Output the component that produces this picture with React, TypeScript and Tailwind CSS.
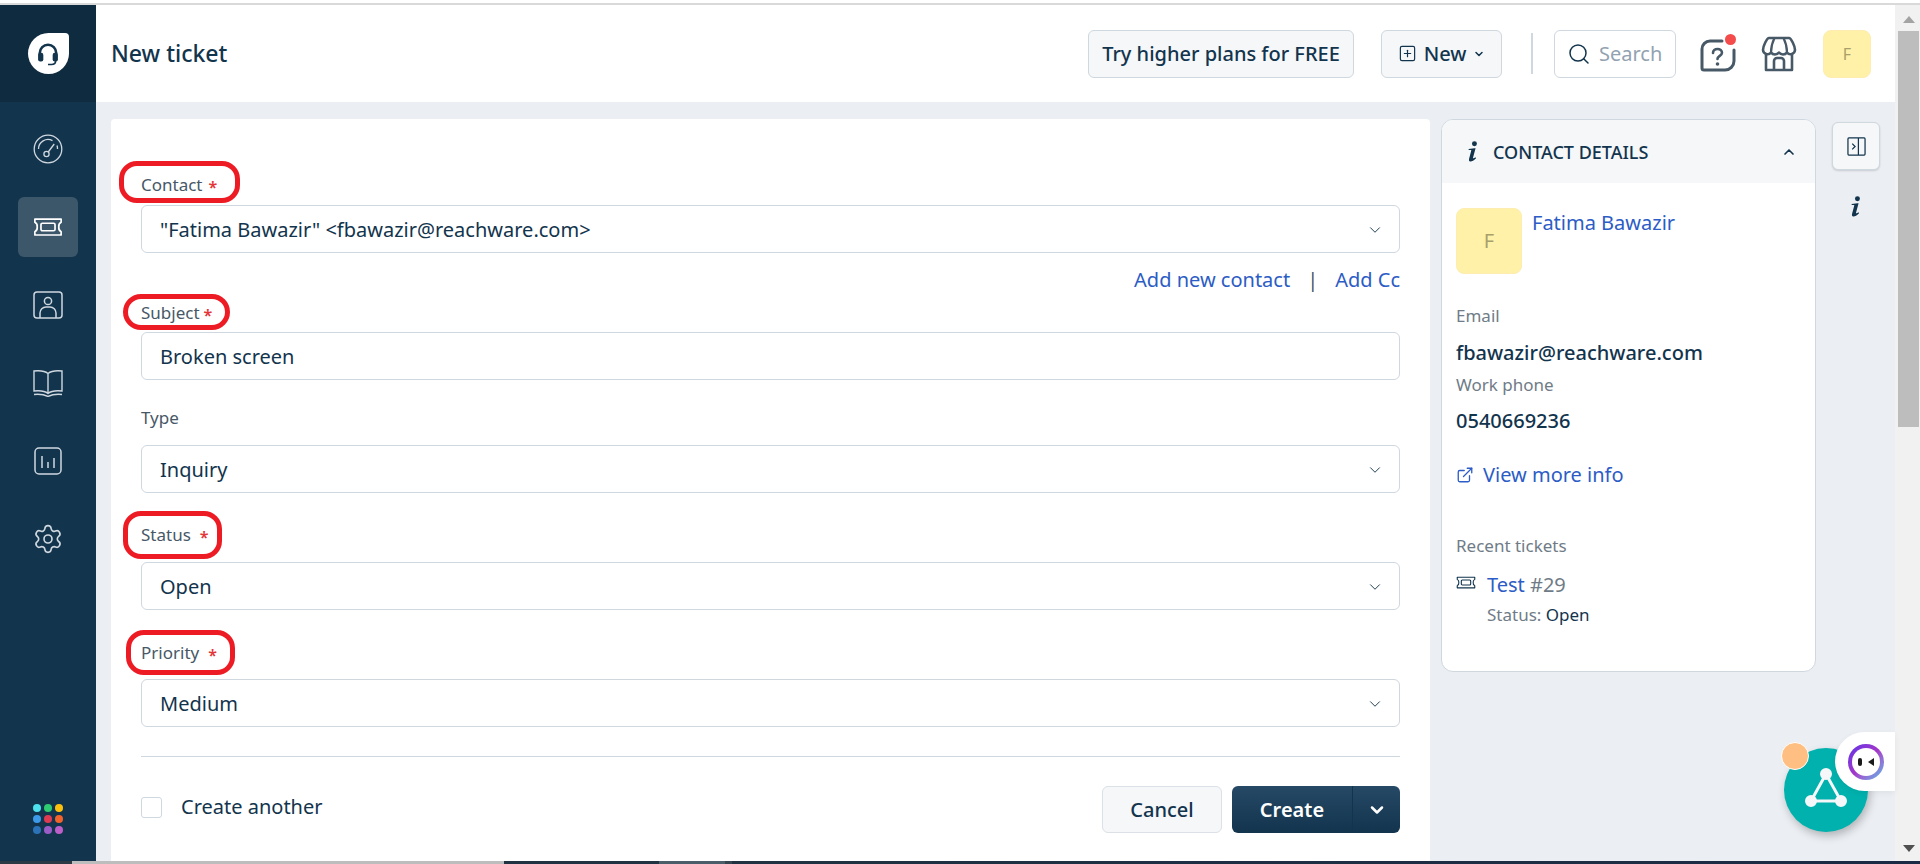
import React from "react";
import { ChevronDown, ChevronUp, Search, SquarePlus, ExternalLink, Settings } from "lucide-react";

const font = { fontFamily: '"Noto Sans", "Open Sans", sans-serif' };

const TicketIcon = ({ className }: { className?: string }) => (
  <svg viewBox="0 0 32 20" fill="none" stroke="currentColor" strokeWidth="1.8" strokeLinejoin="round" className={className}>
    <path d="M2 1.5h28v3.5a5 5 0 0 0-2.5 5 5 5 0 0 0 2.5 5v3.5H2V15a5 5 0 0 0 2.5-5A5 5 0 0 0 2 5z" />
    <rect x="8.5" y="6" width="15" height="8" rx="1.5" />
  </svg>
);

const InfoIcon = () => (
  <svg viewBox="0 0 12 22" className="h-[21px] w-[12px] fill-[#12344d]">
    <circle cx="7.5" cy="2.8" r="2.6" />
    <path d="M1.5 8.5l6-.8h1.2L6 17.5c-.2.9.5 1 2.6-.4l.6.9c-2.6 2.7-4.6 3.6-6 3.4-1.3-.2-1.7-1.2-1.3-2.9L4.2 10c.1-.5-.3-.7-1-.7l-1.8.2z" />
  </svg>
);

const Field = ({
  label,
  value,
  mark,
  ring,
  chevron = true,
  className = "",
}: {
  label: string;
  value: string;
  mark?: string;
  ring?: string;
  chevron?: boolean;
  className?: string;
}) => (
  <div className={className}>
    <div className="relative h-5 text-[17px] leading-[22px] text-[#475867]">
      {label}
      {mark && <span className={`inline-block translate-y-[2px] text-[16px] font-semibold text-[#e43538] ${mark}`}>*</span>}
      {ring && <span className={`absolute rounded-[18px] border-[5px] border-[#ed1c24] ${ring}`} />}
    </div>
    <div className="flex h-12 items-center justify-between rounded-md border border-[#cfd7df] bg-white pl-[18px] pr-[15px] pt-px text-[20px] text-[#12344d]">
      <span>{value}</span>
      {chevron && <ChevronDown size={18} strokeWidth={1.25} className="text-[#12344d]" />}
    </div>
  </div>
);

const dots = ["#4de1ee", "#2ecc71", "#fdc10d", "#3d9ae8", "#de3a52", "#f2622a", "#2c72b8", "#9a5cc6", "#bd5ec9"];

const Sidebar = () => (
  <aside className="flex w-24 shrink-0 flex-col bg-[#12344d] text-[#cfd7df]">
    <div className="flex h-[97px] items-center justify-center bg-[#0f2b40]">
      <div className="flex h-[41px] w-[41px] items-center justify-center rounded-[50%_4px_50%_50%] bg-white">
        <svg viewBox="0 0 24 24" fill="none" stroke="#12344d" strokeWidth="2.2" className="h-[28px] w-[28px]">
          <path d="M5 13v-2a7 7 0 0 1 14 0v2" />
          <rect x="3.5" y="11" width="4.5" height="7.5" rx="1.8" fill="#12344d" stroke="none" />
          <rect x="16" y="11" width="4.5" height="7.5" rx="1.8" fill="#12344d" stroke="none" />
          <path d="M18.5 18c0 2-1.5 3-3.5 3h-3" strokeWidth="1.4" />
        </svg>
      </div>
    </div>
    <div className="flex flex-1 flex-col items-center pt-[32px]">
      <svg viewBox="0 0 30 30" fill="none" stroke="currentColor" strokeWidth="1.3" className="h-[30px] w-[30px]">
        <circle cx="15" cy="15" r="13.8" />
        <path d="M5.5 15a9.5 9.5 0 0 1 14-8.4M24 11.5a9.5 9.5 0 0 1 .5 3.5" />
        <circle cx="13.5" cy="20" r="2.6" />
        <path d="M15.2 18l6-8" />
      </svg>
      <div className="mt-[33px] flex h-[60px] w-[60px] items-center justify-center rounded-md bg-[#3c566a] text-white">
        <TicketIcon className="h-[20px] w-[30px]" />
      </div>
      <svg viewBox="0 0 30 28" fill="none" stroke="currentColor" strokeWidth="1.5" className="mt-[34px] h-[28px] w-[30px]">
        <rect x="1" y="1" width="28" height="26" rx="3" />
        <circle cx="15" cy="10" r="3.6" />
        <path d="M7 27v-5a6 6 0 0 1 6-6h4a6 6 0 0 1 6 6v5" />
      </svg>
      <svg viewBox="0 0 32 28" fill="none" stroke="currentColor" strokeWidth="1.4" className="mt-[50px] h-[28px] w-[32px]">
        <path d="M16 4.5C13 2 7 1.5 2 2v20c5-.5 11 0 14 2.500 3-2.500 9-3 14-2.500V2c-5-.5-11 0-14 2.500zM16 4.500v20" />
        <path d="M2 25.500c5-.5 10 0 14 2 4-2 9-2.500 14-2" />
      </svg>
      <svg viewBox="0 0 28 28" fill="none" stroke="currentColor" strokeWidth="1.5" className="mt-[50px] h-[28px] w-[28px]">
        <rect x="1" y="1" width="26" height="26" rx="4" />
        <path d="M8 9v12M14 15v6M20 11v10" />
      </svg>
      <Settings size={32} strokeWidth={1.25} className="mt-[48px]" />
      <div className="mt-auto mb-[27px] grid grid-cols-3 gap-[3px]">
        {dots.map((c) => (
          <span key={c} className="h-2 w-2 rounded-full" style={{ backgroundColor: c }} />
        ))}
      </div>
    </div>
  </aside>
);

const Header = () => (
  <header className="flex h-[97px] shrink-0 items-center bg-white pl-[15px] pr-6 text-[#12344d]">
    <h1 className="text-[23px] font-medium">New ticket</h1>
    <button className="ml-auto h-12 w-[266px] rounded-md border border-[#cfd7df] bg-[#f5f7f9] text-[20px] font-medium">
      Try higher plans for FREE
    </button>
    <button className="ml-[27px] flex h-12 w-[121px] items-center justify-center gap-[7px] rounded-md border border-[#cfd7df] bg-[#f5f7f9] text-[20px] font-medium">
      <SquarePlus size={19} strokeWidth={1.5} />
      New
      <ChevronDown size={12} strokeWidth={3} />
    </button>
    <div className="ml-[29px] h-[41px] w-0.5 bg-[#cfd7df]" />
    <div className="ml-[21px] flex h-12 w-[122px] items-center gap-[8px] rounded-md border border-[#cfd7df] pl-3 text-[20px] text-[#92a2b1]">
      <Search size={24} strokeWidth={1.5} className="shrink-0 text-[#12344d]" />
      Search
    </div>
    <div className="relative ml-[23px] h-[38px] w-[37px]">
      <svg viewBox="0 0 37 38" fill="none" stroke="#475867" strokeWidth="3" strokeLinecap="round" className="h-full w-full">
        <path d="M23 6H11a8 8 0 0 0-8 8v19a2 2 0 0 0 2 2h21a9 9 0 0 0 9-9V15" />
        <path d="M14 18c0-2.5 2-4 4.500-4s4.500 1.500 4.500 3.800c0 3-4.500 3.200-4.500 6.200" strokeWidth="2.6" />
        <circle cx="18.5" cy="29" r="1.8" fill="#475867" stroke="none" />
      </svg>
      <span className="absolute -top-[1px] right-0 h-[11px] w-[11px] rounded-full bg-[#f44b4b]" />
    </div>
    <svg viewBox="0 0 36 36" fill="none" stroke="#475867" strokeWidth="2.6" className="ml-[25px] h-9 w-9" strokeLinejoin="round">
      <path d="M8 2h20c2 0 6 8 6 12a4.500 4.500 0 0 1-8 2.500 5 5 0 0 1-8 0 5 5 0 0 1-8 0A4.500 4.500 0 0 1 2 14C2 10 6 2 8 2z" />
      <path d="M13.5 2c-2 4-3.500 9-3.500 14.500M22.500 2c2 4 3.500 9 3.500 14.500" strokeWidth="2.2" />
      <path d="M5 18v16h26V18M13 34V25a3 3 0 0 1 3-3h4a3 3 0 0 1 3 3v9" />
    </svg>
    <div className="ml-[26px] flex h-12 w-12 items-center justify-center rounded-lg border border-[#fdedb0] bg-[#fff2a8] text-[16px] text-[#a8a06a]">
      F
    </div>
  </header>
);

const FormCard = () => (
  <section className="relative w-[1319px] shrink-0 rounded-t-[4px] bg-white px-[30px] pt-[55px]">
    <Field
      label="Contact"
      mark="ml-[6px]"
      ring="-left-[22px] -top-[13px] h-[42px] w-[121px]"
      value={'"Fatima Bawazir" <fbawazir@reachware.com>'}
      className="[&>div:last-child]:mt-[11px]"
    />
    <div className="mt-[15px] flex h-6 items-center justify-end gap-[17px] text-[20px] text-[#2c5cc5]">
      <span>Add new contact</span>
      <span className="text-[#475867]">|</span>
      <span>Add Cc</span>
    </div>
    <Field
      label="Subject"
      mark="ml-[4px]"
      ring="-left-[18px] -top-[8px] h-[36px] w-[107px]"
      value="Broken screen"
      chevron={false}
      className="mt-[10px] [&>div:last-child]:mt-[10px]"
    />
    <Field label="Type" value="Inquiry" className="mt-[27px] [&>div:last-child]:mt-[18px]" />
    <Field
      label="Status"
      mark="ml-[9px]"
      ring="-left-[18px] -top-[13px] h-[48px] w-[99px]"
      value="Open"
      className="mt-[31px] [&>div:last-child]:mt-[18px]"
    />
    <Field
      label="Priority"
      mark="ml-[9px]"
      ring="-left-[15px] -top-[12px] h-[45px] w-[109px]"
      value="Medium"
      className="mt-[32px] [&>div:last-child]:mt-[17px]"
    />
    <div className="mt-[29px] h-px bg-[#cfd7df]" />
    <div className="mt-[29px] flex items-start justify-between">
      <label className="mt-[6px] flex items-center gap-[19px] text-[20px] text-[#12344d]">
        <span className="h-[21px] w-[21px] rounded-[3px] border border-[#cfd7df]" />
        Create another
      </label>
      <div className="flex gap-[10px]">
        <button className="h-[47px] w-[120px] rounded-md border border-[#dbe1e7] bg-[#f5f7f9] text-[20px] font-medium text-[#12344d]">
          Cancel
        </button>
        <div className="flex h-[47px] w-[168px] rounded-md bg-gradient-to-b from-[#264966] to-[#12344d] text-white">
          <span className="flex w-[120px] items-center justify-center text-[20px] font-semibold">Create</span>
          <span className="flex flex-1 items-center justify-center border-l border-[#12344d]">
            <ChevronDown size={20} strokeWidth={3} />
          </span>
        </div>
      </div>
    </div>
  </section>
);

const ContactCard = () => (
  <section className="ml-[11px] h-[553px] w-[375px] shrink-0 overflow-hidden rounded-xl border border-[#cfd7df] bg-white text-[#12344d]">
    <div className="flex h-[63px] items-center bg-[#f5f7f9] pl-[25px] pr-[18px]">
      <InfoIcon />
      <span className="ml-[14px] pt-px text-[18px] font-medium">CONTACT DETAILS</span>
      <ChevronUp size={16} strokeWidth={2.5} className="ml-auto" />
    </div>
    <div className="px-[14px] pt-[25px]">
      <div className="flex gap-[10px]">
        <div className="flex h-[66px] w-[66px] items-center justify-center rounded-lg border border-[#fdedb0] bg-[#fff2a8] text-[20px] text-[#a8a06a]">
          F
        </div>
        <span className="text-[20px] leading-[30px] text-[#2c5cc5]">Fatima Bawazir</span>
      </div>
      <div className="mt-[31px] text-[17px] leading-[22px] text-[#6f7c87]">Email</div>
      <div className="mt-[14px] text-[20px] font-medium leading-[24px]">fbawazir@reachware.com</div>
      <div className="mt-[9px] text-[17px] leading-[22px] text-[#6f7c87]">Work phone</div>
      <div className="mt-[13px] text-[20px] font-medium leading-[24px]">0540669236</div>
      <div className="mt-[30px] flex items-center gap-[9px] text-[20px] leading-[24px] text-[#2c5cc5]">
        <ExternalLink size={18} strokeWidth={1.75} />
        View more info
      </div>
      <div className="mt-[48px] text-[17px] leading-[22px] text-[#6f7c87]">Recent tickets</div>
      <div className="mt-[16px] flex gap-[11px]">
        <TicketIcon className="mt-[3px] h-[13px] w-[20px]" />
        <div>
          <div className="text-[20px] leading-[24px] text-[#2c5cc5]">
            Test <span className="text-[#6f7c87]">#29</span>
          </div>
          <div className="mt-[7px] text-[17px] leading-[22px] text-[#6f7c87]">
            Status: <span className="text-[#12344d]">Open</span>
          </div>
        </div>
      </div>
    </div>
  </section>
);

const ChatWidget = () => (
  <>
    <div className="absolute bottom-[29px] right-[27px] h-[84px] w-[84px] rounded-full bg-[#00b1ad] shadow-[2px_4px_8px_rgba(0,0,0,0.25)]">
      <svg viewBox="0 0 84 84" className="h-full w-full" fill="#f5f7f9" stroke="#f5f7f9" strokeWidth="3">
        <path d="M42 26L27 53h30z" fill="none" />
        <circle cx="42" cy="26" r="4.5" />
        <circle cx="27" cy="53" r="4.5" />
        <circle cx="57" cy="53" r="4.5" />
      </svg>
    </div>
    <div className="absolute bottom-[91px] right-[86px] h-7 w-7 rounded-full border border-white bg-[#ffbe82]" />
    <div className="absolute bottom-[70px] right-0 flex h-[59px] w-[60px] items-center rounded-l-[30px] bg-white pl-[13px] shadow-[0_2px_6px_rgba(0,0,0,0.06)]">
      <div className="flex h-9 w-9 items-center justify-center rounded-full bg-gradient-to-br from-[#5d2ee8] via-[#a435c9] to-[#25b8e8]">
        <div className="flex h-7 w-7 items-center justify-center gap-[5px] rounded-full bg-white">
          <span className="h-[8px] w-[4px] rounded-full bg-[#1a1a1a]" />
          <svg viewBox="0 0 8 8" className="h-2 w-2 fill-[#1a1a1a]">
            <path d="M7 0v8L1 4z" />
          </svg>
        </div>
      </div>
    </div>
  </>
);

const Scrollbar = () => (
  <div className="flex w-[25px] shrink-0 flex-col items-center bg-[#f1f1f1] pl-[2px]">
    <div className="mt-[11px] h-0 w-0 border-x-[6px] border-b-[7px] border-x-transparent border-b-[#a3a3a3]" />
    <div className="mt-[8px] h-[396px] w-[21px] bg-[#bdbdbd]" />
    <div className="mt-auto mb-[9px] h-0 w-0 border-x-[6px] border-t-[7px] border-x-transparent border-t-[#505050]" />
  </div>
);

export default function App() {
  return (
    <div className="flex h-[864px] w-[1920px] flex-col overflow-hidden bg-white" style={font}>
      <div className="mt-[3px] h-[2px] shrink-0 bg-[#d9d9d9]" />
      <div className="flex min-h-0 flex-1">
        <Sidebar />
        <main className="relative flex min-w-0 flex-1 flex-col">
          <Header />
          <div className="flex min-h-0 flex-1 overflow-hidden bg-[#ebeff3] pl-[15px] pt-[17px]">
            <FormCard />
            <ContactCard />
            <div className="ml-4 mt-[3px] flex w-[48px] shrink-0 flex-col items-center">
              <div className="flex h-12 w-12 items-center justify-center rounded-md border border-[#cfd7df] bg-[#f5f7f9] shadow-[0_1px_2px_rgba(0,0,0,0.15)]">
                <svg viewBox="0 0 20 20" fill="none" stroke="#12344d" strokeWidth="1.3" className="h-[19px] w-[19px]">
                  <rect x="1" y="1" width="18" height="18" rx="1" />
                  <path d="M12 1v18M5.5 7l3 3-3 3" />
                </svg>
              </div>
              <div className="mt-[26px]">
                <InfoIcon />
              </div>
            </div>
          </div>
          <ChatWidget />
        </main>
        <Scrollbar />
      </div>
      <div className="flex h-[3px] shrink-0">
        <div className="w-[72px] bg-[#2b3a45]" />
        <div className="w-[432px] bg-[#bdbdbd]" />
        <div className="w-[155px] bg-[#1f3342]" />
        <div className="w-[66px] bg-[#4b5f6b]" />
        <div className="w-[7px] bg-[#34454f]" />
        <div className="flex-1 bg-gradient-to-r from-[#1f3342] to-[#1b2a44]" />
      </div>
    </div>
  );
}
